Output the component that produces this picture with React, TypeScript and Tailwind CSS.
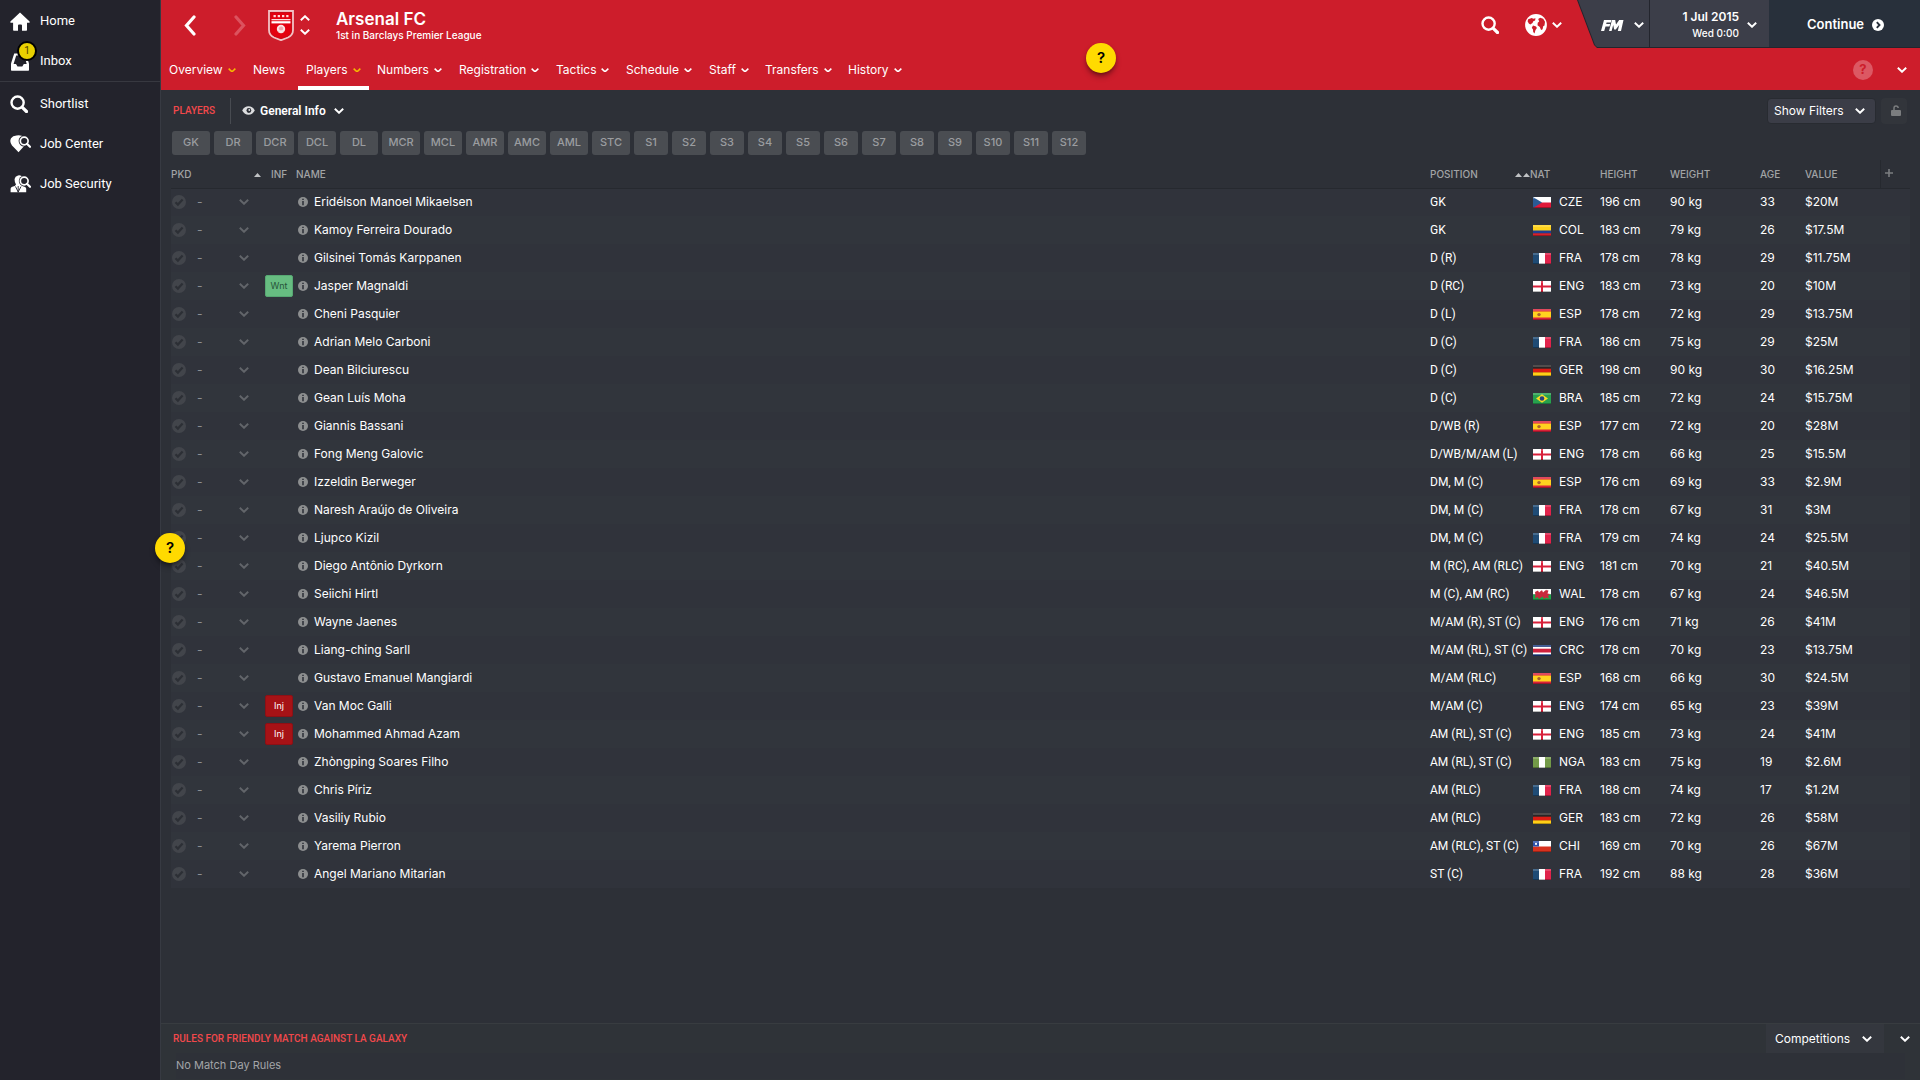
import type { ReactNode } from "react";

function Chevron({ className = "w-[10px]" }: { className?: string }) {
  return (
    <svg viewBox="0 0 10 6" className={`shrink-0 ${className}`} fill="none" stroke="currentColor" strokeWidth="1.9" aria-hidden="true">
      <path d="M.8 .8 5 4.8 9.2 .8" />
    </svg>
  );
}

function SearchIcon({ className }: { className?: string }) {
  return (
    <svg viewBox="0 0 18 18" className={className} fill="none" stroke="currentColor" aria-hidden="true">
      <circle cx="7.6" cy="7.6" r="6.1" strokeWidth="2.4" />
      <path d="m12.3 12.3 4.2 4.2" strokeWidth="3.2" strokeLinecap="round" />
    </svg>
  );
}

function HomeIcon() {
  return (
    <svg viewBox="0 0 20 19" className="w-5" fill="currentColor" aria-hidden="true">
      <path d="M10 .5 19.6 9.6v1.2H17V18q0 .7-.7.7H12V13.4q0-1-1-1H9q-1 0-1 1v5.3H3.800q-.7 0-.7-.7v-7.200H.4V9.600z" />
    </svg>
  );
}

function InboxIcon() {
  return (
    <svg viewBox="0 0 20 19" className="w-5" aria-hidden="true">
      <path d="M4.200 1.500h11.600L19 11.500V18q0 .7-.7.7H1.700Q1 18.700 1 18v-6.500z" fill="#fff" />
      <path d="M6.200 3.500h8.200l2.300 8.500h-2.900l-1.500 2.500H7.500L6 12H3.600z" fill="#23232c" />
    </svg>
  );
}

function JobCenterIcon() {
  return (
    <svg viewBox="0 0 21 18" className="w-[21px]" aria-hidden="true">
      <path d="M6.500.5Q11-.3 14 2l2 7-7.500 8.300Q5.500 14 2 10.500-.8 6.800 1 3.300 2.800.7 6.500.5z" fill="#fff" />
      <path d="m17.500 9.300 2.500 2.500" stroke="#23232c" strokeWidth="4" />
      <circle cx="14.200" cy="6" r="5.600" fill="#23232c" />
      <circle cx="14.200" cy="6" r="3.900" fill="none" stroke="#fff" strokeWidth="1.700" />
      <path d="m17 8.800 3 3" stroke="#fff" strokeWidth="2.200" strokeLinecap="round" />
    </svg>
  );
}

function JobSecurityIcon() {
  return (
    <svg viewBox="0 0 21 18" className="w-[21px]" aria-hidden="true">
      <path d="M8 .5q3-.6 4.500 1.500L12 9.500l1 1.500q3 .8 3.200 2.500v3.700H.6v-3.500Q.8 11.800 4.800 11L6 9.500Q4.500 7.500 4.600 4 5 1.200 8 .5z" fill="#fff" />
      <path d="M8.200 11v6.500M5.500 11.500l2.700 5.500 2.800-5.500" stroke="#23232c" strokeWidth=".9" fill="none" />
      <path d="m17.500 9.300 2.500 2.500" stroke="#23232c" strokeWidth="4" />
      <circle cx="14.200" cy="6" r="5.400" fill="#23232c" />
      <circle cx="14.200" cy="6" r="3.900" fill="none" stroke="#fff" strokeWidth="1.700" />
      <path d="m17 8.800 3 3" stroke="#fff" strokeWidth="2.200" strokeLinecap="round" />
    </svg>
  );
}

function Crest() {
  return (
    <svg viewBox="0 0 26 31" className="w-[26px]" aria-hidden="true">
      <path d="M1 1h24v19q0 5-5 7.500L13 30.200 6 27.500Q1 25 1 20z" fill="#e4000f" stroke="#f1c3c6" strokeWidth="1.800" />
      <path d="M2.600 2.400h20.800V20q0 4.300-4.200 6.300L13 28.700 6.800 26.300Q2.600 24.300 2.600 20z" fill="none" stroke="#b51420" strokeWidth=".6" />
      <g fill="#ffd9da">
        <rect x="5.500" y="5" width="2.300" height="2.200" />
        <rect x="9.700" y="5" width="2.300" height="2.200" />
        <rect x="14" y="5" width="2.300" height="2.200" />
        <rect x="18.200" y="5" width="2.300" height="2.200" />
        <rect x="3.500" y="9" width="19" height="1.300" />
      </g>
      <rect x="3.500" y="11.200" width="19" height="2.200" fill="#fff" />
      <circle cx="13" cy="19" r="4.200" fill="#fbe5e6" />
      <path d="m11 18 2-1.300 2 1-.5 2.300h-2.700zM10 21.500l1.500.7M15.500 21.300l-1 1" fill="#eda6aa" stroke="#eda6aa" strokeWidth=".7" />
    </svg>
  );
}

function GlobeIcon() {
  return (
    <svg viewBox="0 0 22 22" className="w-[22px]" aria-hidden="true">
      <circle cx="11" cy="11" r="10.900" fill="#fff" />
      <path
        d="M3.200 5.200 6.800 3.900l1.500.9 2.200-.6-.4 2.200-1.800.8-.8 1.900-2.200 1.500L3.800 9.500 2.600 7.200zM13.200 5l2-1.200 3 1 1.800 3-.5 3.700-1.300.7-.6 3-1.500.9-1.300-3.200-2.300-1.600.2-2.500 1.500-1.200zM8 11.600l3 .8.900 1.600-1.400 2-1 3.500-1.300-1.500-.2-2.600-1.200-1.700z"
        fill="#cd1d2b"
      />
    </svg>
  );
}

function FmLogo() {
  return (
    <svg viewBox="0 0 23 11" className="w-[23px]" fill="#fff" role="img" aria-label="FM">
      <path d="M3 0h7.500L9.800 2.600H5.600l-.4 1.500h4L8.500 6.500h-4L3.200 11H0zM11 0h3.200l.8 4.500L18.200 0h4.300L20 11h-3.200l1.400-6-3.400 4.600h-1.600L12.200 5l-1.600 6H8z" />
    </svg>
  );
}

function EyeIcon() {
  return (
    <svg viewBox="0 0 13 9" className="w-[13px]" aria-hidden="true">
      <path d="M6.500.3Q10.500.3 12.800 4.500 10.500 8.700 6.500 8.700T.2 4.500Q2.500.3 6.500.3z" fill="#dcdddf" />
      <circle cx="6.900" cy="4.500" r="2.400" fill="#2d3037" />
      <circle cx="7.300" cy="4" r=".9" fill="#dcdddf" />
    </svg>
  );
}

function Flag({ code }: { code: string }) {
  return (
    <svg viewBox="0 0 18 11" className="h-[11px] w-[18px] shrink-0" aria-hidden="true">
      <FlagArt code={code} />
      <rect width="18" height="2" fill="#fff" opacity=".18" />
      <rect y="10" width="18" height="1" fill="#000" opacity=".28" />
    </svg>
  );
}

function FlagArt({ code }: { code: string }) {
  switch (code) {
    case "CZE":
      return (<><rect width="18" height="6" fill="#fff" /><rect y="5.500" width="18" height="5.500" fill="#e0193a" /><path d="M0 0l9 5.500L0 11z" fill="#2b5a94" /></>);
    case "COL":
      return (<><rect width="18" height="6" fill="#ffd31c" /><rect y="5.500" width="18" height="3" fill="#1e3f93" /><rect y="8.300" width="18" height="2.700" fill="#d6202c" /></>);
    case "FRA":
      return (<><rect width="18" height="11" fill="#fff" /><rect width="6" height="11" fill="#1f4b75" /><rect x="12" width="6" height="11" fill="#e0234b" /></>);
    case "NGA":
      return (<><rect width="18" height="11" fill="#fff" /><rect width="6" height="11" fill="#739a48" /><rect x="12" width="6" height="11" fill="#739a48" /></>);
    case "ENG":
      return (<><rect width="18" height="11" fill="#fff" /><path d="M9 0v11M0 5.500h18" stroke="#d8203a" strokeWidth="2" /></>);
    case "ESP":
      return (<><rect width="18" height="11" fill="#d9213a" /><rect y="2.500" width="18" height="6" fill="#ffd21f" /><circle cx="6" cy="5.600" r="1.700" fill="#a9622a" /></>);
    case "GER":
      return (<><rect width="18" height="11" fill="#2a2626" /><rect y="3.700" width="18" height="4" fill="#dd1c14" /><rect y="7.400" width="18" height="3.600" fill="#ffcf17" /></>);
    case "BRA":
      return (<><rect width="18" height="11" fill="#27a04e" /><path d="M9 1.200l6 4.300-6 4.300-6-4.300z" fill="#f8dc25" /><circle cx="9" cy="5.500" r="2.300" fill="#27417f" /></>);
    case "WAL":
      return (<><rect width="18" height="5.500" fill="#fff" /><rect y="5.500" width="18" height="5.500" fill="#1fa24a" /><path d="M2 3l3-1.500 1 2L9 1l1 2.500L13 .8l2.500.7-1 3L17 5l-2 2 1 2.500-3-1L11 10 9.500 7.500 6 10 4.500 8 2 9.500l.5-3z" fill="#c8283c" /></>);
    case "CRC":
      return (<><rect width="18" height="11" fill="#1c3a7d" /><rect y="2" width="18" height="7.300" fill="#fff" /><rect y="3.700" width="18" height="3.800" fill="#d0213c" /></>);
    case "CHI":
      return (<><rect width="18" height="6" fill="#fff" /><rect y="5.500" width="18" height="5.500" fill="#d8321f" /><rect width="6" height="5.500" fill="#2b50a8" /><circle cx="3" cy="2.900" r="1.100" fill="#fff" /></>);
    default:
      return null;
  }
}

type Player = [name: string, position: string, nat: string, height: number, weight: number, age: number, value: string, inf?: string];

const players: Player[] = [
  ["Eridélson Manoel Mikaelsen", "GK", "CZE", 196, 90, 33, "$20M"],
  ["Kamoy Ferreira Dourado", "GK", "COL", 183, 79, 26, "$17.5M"],
  ["Gilsinei Tomás Karppanen", "D (R)", "FRA", 178, 78, 29, "$11.75M"],
  ["Jasper Magnaldi", "D (RC)", "ENG", 183, 73, 20, "$10M", "Wnt"],
  ["Cheni Pasquier", "D (L)", "ESP", 178, 72, 29, "$13.75M"],
  ["Adrian Melo Carboni", "D (C)", "FRA", 186, 75, 29, "$25M"],
  ["Dean Bilciurescu", "D (C)", "GER", 198, 90, 30, "$16.25M"],
  ["Gean Luís Moha", "D (C)", "BRA", 185, 72, 24, "$15.75M"],
  ["Giannis Bassani", "D/WB (R)", "ESP", 177, 72, 20, "$28M"],
  ["Fong Meng Galovic", "D/WB/M/AM (L)", "ENG", 178, 66, 25, "$15.5M"],
  ["Izzeldin Berweger", "DM, M (C)", "ESP", 176, 69, 33, "$2.9M"],
  ["Naresh Araújo de Oliveira", "DM, M (C)", "FRA", 178, 67, 31, "$3M"],
  ["Ljupco Kizil", "DM, M (C)", "FRA", 179, 74, 24, "$25.5M"],
  ["Diego Antônio Dyrkorn", "M (RC), AM (RLC)", "ENG", 181, 70, 21, "$40.5M"],
  ["Seiichi Hirtl", "M (C), AM (RC)", "WAL", 178, 67, 24, "$46.5M"],
  ["Wayne Jaenes", "M/AM (R), ST (C)", "ENG", 176, 71, 26, "$41M"],
  ["Liang-ching Sarll", "M/AM (RL), ST (C)", "CRC", 178, 70, 23, "$13.75M"],
  ["Gustavo Emanuel Mangiardi", "M/AM (RLC)", "ESP", 168, 66, 30, "$24.5M"],
  ["Van Moc Galli", "M/AM (C)", "ENG", 174, 65, 23, "$39M", "Inj"],
  ["Mohammed Ahmad Azam", "AM (RL), ST (C)", "ENG", 185, 73, 24, "$41M", "Inj"],
  ["Zhòngping Soares Filho", "AM (RL), ST (C)", "NGA", 183, 75, 19, "$2.6M"],
  ["Chris Píriz", "AM (RLC)", "FRA", 188, 74, 17, "$1.2M"],
  ["Vasiliy Rubio", "AM (RLC)", "GER", 183, 72, 26, "$58M"],
  ["Yarema Pierron", "AM (RLC), ST (C)", "CHI", 169, 70, 26, "$67M"],
  ["Angel Mariano Mitarian", "ST (C)", "FRA", 192, 88, 28, "$36M"],
];

const wideSlots = ["GK", "DR", "DCR", "DCL", "DL", "MCR", "MCL", "AMR", "AMC", "AML", "STC"];
const subSlots = ["S1", "S2", "S3", "S4", "S5", "S6", "S7", "S8", "S9", "S10", "S11", "S12"];

const tabs: { label: string; width: string; menu?: boolean; highlight?: boolean; active?: boolean }[] = [
  { label: "Overview", width: "w-[84px]", menu: true, highlight: true },
  { label: "News", width: "w-[53px]" },
  { label: "Players", width: "w-[71px]", menu: true, highlight: true, active: true },
  { label: "Numbers", width: "w-[82px]", menu: true },
  { label: "Registration", width: "w-[97px]", menu: true },
  { label: "Tactics", width: "w-[70px]", menu: true },
  { label: "Schedule", width: "w-[83px]", menu: true },
  { label: "Staff", width: "w-[56px]", menu: true },
  { label: "Transfers", width: "w-[83px]", menu: true },
  { label: "History", width: "w-[68px]", menu: true },
];

function SideLink({ icon, label, badge }: { icon: ReactNode; label: string; badge?: string }) {
  return (
    <a href="#" className="relative flex h-10 items-center gap-2 pl-[10px] font-[Roboto,sans-serif] text-[13px] font-normal">
      <span className="flex w-[22px] shrink-0 items-center">{icon}</span>
      {label}
      {badge && (
        <span className="absolute top-0 left-[17px] flex size-5 items-center justify-center rounded-full border-2 border-black bg-[#e8d000] text-[10px] leading-none text-[#4a3c00]">
          {badge}
        </span>
      )}
    </a>
  );
}

function SortArrow() {
  return (
    <svg viewBox="0 0 7 4" className="w-[7px]" fill="#c0c2c4" aria-hidden="true">
      <path d="M3.500 0 7 4H0z" />
    </svg>
  );
}

function Hint({ place }: { place: string }) {
  return (
    <button aria-label="Hint" className={`absolute flex size-[30px] items-center justify-center rounded-full bg-[#ffda00] text-[15px] font-semibold text-black shadow-md shadow-black/40 ${place}`}>
      ?
    </button>
  );
}

function PlayerRow({ player, shaded }: { player: Player; shaded: boolean }) {
  const [name, position, nat, height, weight, age, value, inf] = player;
  return (
    <tr className={`h-7 ${shaded ? "bg-[#31353c]" : "bg-[#30333b]"}`}>
      <td>
        <div className="flex items-center">
          <label className="relative flex size-4 items-center">
            <input type="checkbox" aria-label={`Pick ${name}`} className="ml-px size-[14px] appearance-none rounded-full bg-[#42454b]" />
            <svg viewBox="0 0 14 14" className="pointer-events-none absolute left-px w-[14px]" fill="none" stroke="#2c2f35" strokeWidth="2.200" aria-hidden="true">
              <path d="m3.500 7.200 2.400 2.400 4.700-5" />
            </svg>
          </label>
          <div className="relative ml-2 flex grow items-center">
            <select aria-label={`Position for ${name}`} className="w-full appearance-none pl-[2px] text-[#8b8e92]">
              <option>-</option>
            </select>
            <Chevron className="pointer-events-none absolute right-3 w-[10px] text-[#62656a]" />
          </div>
        </div>
      </td>
      <td>
        {inf && (
          <span className={`mx-auto mr-[2px] flex h-[22px] w-7 items-center justify-center rounded-xs border text-[9px] ${inf === "Wnt" ? "border-[#57a873] bg-[#67bd81] text-[#27553a]" : "border-[#8c1015] bg-[#a61216] text-white"}`}>
            {inf}
          </span>
        )}
      </td>
      <td className="pl-[3px]">
        <div className="flex items-center gap-[6px]">
          <svg viewBox="0 0 10 10" className="w-[10px] shrink-0" aria-hidden="true">
            <circle cx="5" cy="5" r="5" fill="#8d8f90" />
            <path d="M4.200 1.700h1.600v1.400H4.200zM4.200 4h1.600v4.200H4.200z" fill="#30333b" />
          </svg>
          <a href="#">{name}</a>
        </div>
      </td>
      <td className="font-[Roboto,sans-serif]">{position}</td>
      <td>
        <div className="flex items-center gap-2 pl-[3px]">
          <Flag code={nat} />
          {nat}
        </div>
      </td>
      <td>{height} cm</td>
      <td>{weight} kg</td>
      <td>{age}</td>
      <td colSpan={2}>{value}</td>
    </tr>
  );
}

export default function App() {
  return (
    <div className="relative flex min-h-screen bg-[#2d3037] font-[Inter,sans-serif] text-[12px] font-medium text-white">
      <nav className="w-[161px] shrink-0 border-r border-[#373a42] bg-[#23232c]">
        <div className="border-b border-[#373840] pt-px">
          <SideLink icon={<HomeIcon />} label="Home" />
          <SideLink icon={<InboxIcon />} label="Inbox" badge="1" />
        </div>
        <div className="pt-[2px]">
          <SideLink icon={<SearchIcon className="w-[18px]" />} label="Shortlist" />
          <SideLink icon={<JobCenterIcon />} label="Job Center" />
          <SideLink icon={<JobSecurityIcon />} label="Job Security" />
        </div>
      </nav>

      <div className="flex min-w-0 grow flex-col">
        <header className="bg-[#cd1d2b]">
          <div className="flex h-12">
            <div className="flex items-center pt-[2px] pl-[23px]">
              <button aria-label="Back">
                <svg viewBox="0 0 12 21" className="w-3" fill="none" stroke="#fff" strokeWidth="3.200" strokeLinecap="round">
                  <path d="M10 2 2.500 10.500 10 19" />
                </svg>
              </button>
              <button aria-label="Forward" className="ml-[38px]">
                <svg viewBox="0 0 12 21" className="w-3" fill="none" stroke="#dc525e" strokeWidth="3.200" strokeLinecap="round">
                  <path d="M2 2l7.500 8.500L2 19" />
                </svg>
              </button>
              <span className="ml-[22px]"><Crest /></span>
              <div className="ml-[6px] flex flex-col gap-2">
                <button aria-label="Previous club"><Chevron className="w-[10px] rotate-180" /></button>
                <button aria-label="Next club"><Chevron className="w-[10px]" /></button>
              </div>
              <div className="ml-[26px]">
                <h1 className="text-[17px] leading-5 font-semibold">Arsenal FC</h1>
                <p className="text-[10px] leading-3">1st in Barclays Premier League</p>
              </div>
            </div>
            <div className="ml-auto flex h-12">
              <button aria-label="Search" className="mr-[26px] pt-[2px]"><SearchIcon className="w-[18px]" /></button>
              <button aria-label="World" className="mr-[15px] flex items-center gap-[5px] pt-[2px]"><GlobeIcon /><Chevron /></button>
              <div className="flex bg-[#23252d] pb-px [clip-path:polygon(0_0,100%_0,100%_100%,20px_100%,17px_45px)]">
                <button className="flex w-[72px] items-center gap-[10px] bg-[#3c3e49] pt-[3px] pl-6 [clip-path:polygon(1px_0,100%_0,100%_100%,20px_100%,18px_45px)]"><FmLogo /><Chevron /></button>
                <button className="ml-px flex w-[119px] items-center justify-end gap-2 bg-[#3c3e49] pt-[3px] pr-3 text-right">
                  <span>
                    <span className="block text-[12px] leading-4 font-semibold">1 Jul 2015</span>
                    <span className="block text-[10px] leading-4">Wed 0:00</span>
                  </span>
                  <Chevron />
                </button>
                <button className="flex w-[151px] items-center gap-2 bg-[#28303b] pt-[3px] pl-[38px] text-[13px] font-semibold">
                  Continue
                  <svg viewBox="0 0 12 12" className="w-3" aria-hidden="true">
                    <circle cx="6" cy="6" r="6" fill="#fff" />
                    <path d="M4.800 3.200 7.500 6 4.800 8.800" fill="none" stroke="#28303b" strokeWidth="1.900" />
                  </svg>
                </button>
              </div>
            </div>
          </div>
          <div className="flex h-[42px]">
            {tabs.map((t) => (
              <button key={t.label} className={`flex items-center gap-[5px] border-b-4 px-2 pt-[6px] font-normal ${t.width} ${t.active ? "border-white" : "border-transparent"}`}>
                {t.label}
                {t.menu && <Chevron className={t.highlight ? "w-2 text-[#f5b800]" : "w-2"} />}
              </button>
            ))}
            <div className="mr-[13px] ml-auto flex items-center gap-6 pt-[2px]">
              <button aria-label="Help" className="flex size-5 items-center justify-center rounded-full bg-[#dc5863] text-[13px] font-bold text-[#cd1d2b]">?</button>
              <button aria-label="Expand"><Chevron /></button>
            </div>
          </div>
        </header>

        <main className="grow">
          <div className="flex h-[41px] items-center pr-[13px] pl-3">
            <h2 className="w-[57px] font-[Roboto,sans-serif] text-[10px] text-[#f2484b]">PLAYERS</h2>
            <div className="relative flex h-[26px] items-center border-l border-[#484b51] pl-[11px]">
              <EyeIcon />
              <select aria-label="View" className="appearance-none pr-[18px] pl-[5px] font-[Roboto,sans-serif] font-semibold">
                <option>General Info</option>
              </select>
              <Chevron className="pointer-events-none absolute right-0 w-[10px]" />
            </div>
            <button className="ml-auto flex h-[26px] w-[109px] items-center justify-between rounded-sm border border-[#282b31] bg-[#3b3d47] pr-[10px] pl-[6px] font-normal">
              Show Filters
              <Chevron />
            </button>
            <button aria-label="Lock" className="ml-[5px] flex size-[26px] items-center justify-center rounded-sm bg-[#32353b]">
              <svg viewBox="0 0 10 11" className="ml-1 w-[10px]" aria-hidden="true">
                <rect y="5" width="10" height="6" rx="1" fill="#7b7d7f" />
                <path d="M3 6V3.200Q3 1 5 1t2.200 2" fill="none" stroke="#7b7d7f" strokeWidth="1.500" />
              </svg>
            </button>
          </div>

          <div className="flex gap-1 pl-[11px] text-[11px] text-[#9b9da0]">
            {wideSlots.map((s) => (
              <button key={s} className="h-6 w-[38px] rounded-[3px] bg-[#4a4d52] pb-px">{s}</button>
            ))}
            {subSlots.map((s) => (
              <button key={s} className="h-6 w-[34px] rounded-[3px] bg-[#4a4d52] pb-px">{s}</button>
            ))}
          </div>

          <div className="pt-[5px] pr-[10px] pl-[10px]">
            <table className="w-full table-fixed text-left whitespace-nowrap">
              <colgroup>
                <col className="w-[90px]" />
                <col className="w-[34px]" />
                <col />
                <col className="w-[100px]" />
                <col className="w-[70px]" />
                <col className="w-[70px]" />
                <col className="w-[90px]" />
                <col className="w-[45px]" />
                <col className="w-[75px]" />
                <col className="w-[30px]" />
              </colgroup>
              <thead className="text-[10px] text-[#a2a4a6]">
                <tr className="h-7 border-b border-[#26292f] [&_th]:pt-[2px] [&_th]:font-medium">
                  <th scope="col"><div className="flex items-center justify-between">PKD<SortArrow /></div></th>
                  <th scope="col" className="pl-[10px]">INF</th>
                  <th scope="col" className="pl-px">NAME</th>
                  <th scope="col"><div className="flex items-center gap-px">POSITION<span className="ml-auto"><SortArrow /></span><SortArrow /></div></th>
                  <th scope="col">NAT</th>
                  <th scope="col">HEIGHT</th>
                  <th scope="col">WEIGHT</th>
                  <th scope="col">AGE</th>
                  <th scope="col">VALUE</th>
                  <th scope="col" className="border-l border-[#26292f] pb-1">
                    <button aria-label="Add column" className="block pl-1">
                      <svg viewBox="0 0 8 8" className="w-2" stroke="#7b7d80" strokeWidth="1.600"><path d="M4 0v8M0 4h8" /></svg>
                    </button>
                  </th>
                </tr>
              </thead>
              <tbody className="font-normal">
                {players.map((p, i) => <PlayerRow key={p[0]} player={p} shaded={i % 2 === 1} />)}
              </tbody>
            </table>
          </div>
        </main>

        <footer className="h-[57px] border-t border-[#383c40] bg-[#2f3338]">
          <div className="flex h-[29px] items-center pr-[10px] pl-3">
            <h2 className="font-[Roboto,sans-serif] text-[10px] text-[#f2484b]">RULES FOR FRIENDLY MATCH AGAINST LA GALAXY</h2>
            <div className="relative ml-auto flex h-[29px] w-[118px] items-center bg-[#34373e]">
              <select aria-label="Competitions" className="w-full appearance-none pl-[9px] font-normal">
                <option>Competitions</option>
              </select>
              <Chevron className="pointer-events-none absolute right-3 w-[10px]" />
            </div>
            <button aria-label="Collapse" className="ml-4"><Chevron /></button>
          </div>
          <p className="mr-[15px] ml-[15px] h-[26px] bg-[#2e3138] text-[11px] leading-6 font-normal text-[#a3a5a8]">No Match Day Rules</p>
        </footer>
      </div>

      <Hint place="top-[43px] left-[1086px]" />
      <Hint place="top-[533px] left-[155px]" />
    </div>
  );
}
